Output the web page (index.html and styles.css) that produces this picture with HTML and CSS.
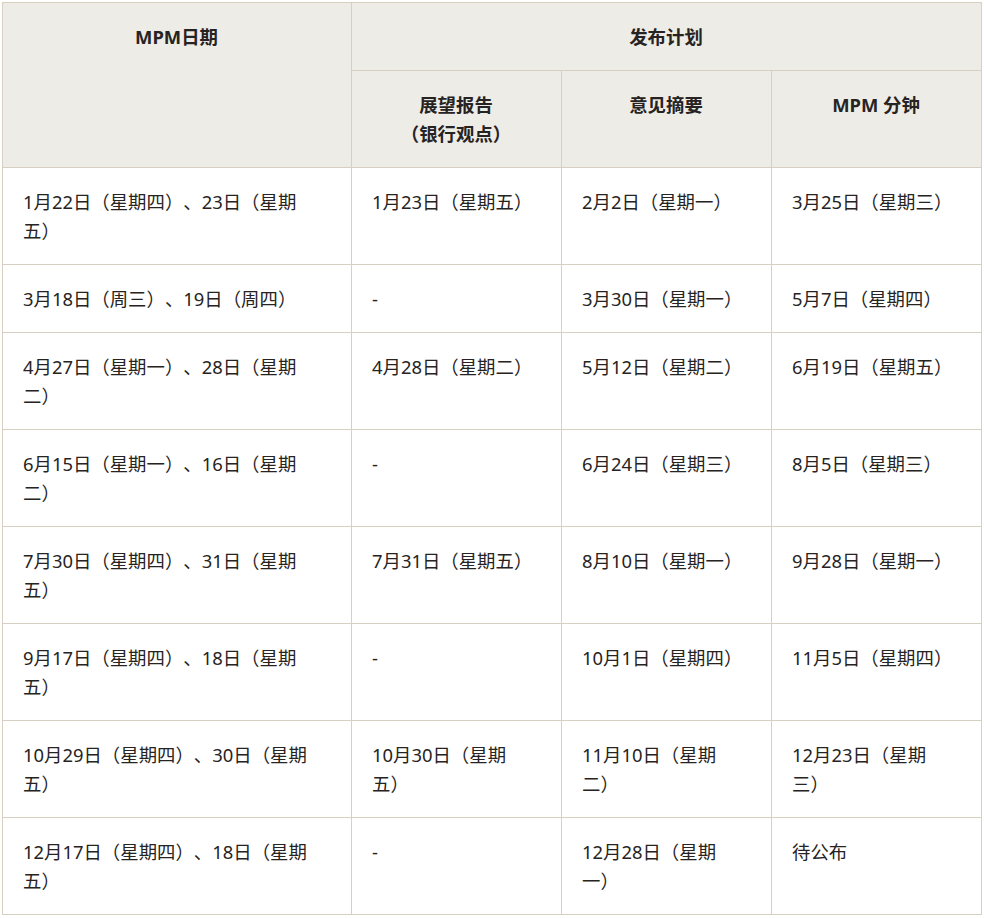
FILE: index.html
```html
<!DOCTYPE html>
<html lang="zh-CN">
<head>
<meta charset="utf-8">
<link rel="stylesheet" href="styles.css">
</head>
<body>
<div class="wrap">
<table class="schedule">
  <colgroup>
    <col class="c1"><col class="c2"><col class="c3"><col class="c4">
  </colgroup>
  <thead>
    <tr>
      <th rowspan="2">MPM日期</th>
      <th colspan="3">发布计划</th>
    </tr>
    <tr>
      <th>展望报告<br>（银行观点）</th>
      <th>意见摘要</th>
      <th>MPM 分钟</th>
    </tr>
  </thead>
  <tbody>
    <tr><td>1月22日（星期四）、23日（星期五）</td><td>1月23日（星期五）</td><td>2月2日（星期一）</td><td>3月25日（星期三）</td></tr>
    <tr><td>3月18日（周三）、19日（周四）</td><td>-</td><td>3月30日（星期一）</td><td>5月7日（星期四）</td></tr>
    <tr><td>4月27日（星期一）、28日（星期二）</td><td>4月28日（星期二）</td><td>5月12日（星期二）</td><td>6月19日（星期五）</td></tr>
    <tr><td>6月15日（星期一）、16日（星期二）</td><td>-</td><td>6月24日（星期三）</td><td>8月5日（星期三）</td></tr>
    <tr><td>7月30日（星期四）、31日（星期五）</td><td>7月31日（星期五）</td><td>8月10日（星期一）</td><td>9月28日（星期一）</td></tr>
    <tr><td>9月17日（星期四）、18日（星期五）</td><td>-</td><td>10月1日（星期四）</td><td>11月5日（星期四）</td></tr>
    <tr><td>10月29日（星期四）、30日（星期五）</td><td>10月30日（星期五）</td><td>11月10日（星期二）</td><td>12月23日（星期三）</td></tr>
    <tr><td>12月17日（星期四）、18日（星期五）</td><td>-</td><td>12月28日（星期一）</td><td>待公布</td></tr>
  </tbody>
</table>
</div>
</body>
</html>
```

FILE: styles.css
```css
html, body {
  margin: 0;
  padding: 0;
  background: #ffffff;
}
.wrap {
  padding: 2px;
}
.schedule {
  border-collapse: collapse;
  table-layout: fixed;
  width: 980px;
  font-family: "Noto Sans", "Noto Sans CJK SC", sans-serif;
  font-size: 18.4px;
  line-height: 29px;
  color: #262322;
  text-spacing-trim: space-all;
}
.c1 { width: 349px; }
.c2, .c3, .c4 { width: 210px; }
.schedule th,
.schedule td {
  border: 1px solid #d8cfc3;
  padding: 19px 21px 19px 20px;
  vertical-align: top;
  text-align: left;
}
.schedule th {
  background: #eeece7;
  font-weight: 700;
  text-align: center;
}
```
